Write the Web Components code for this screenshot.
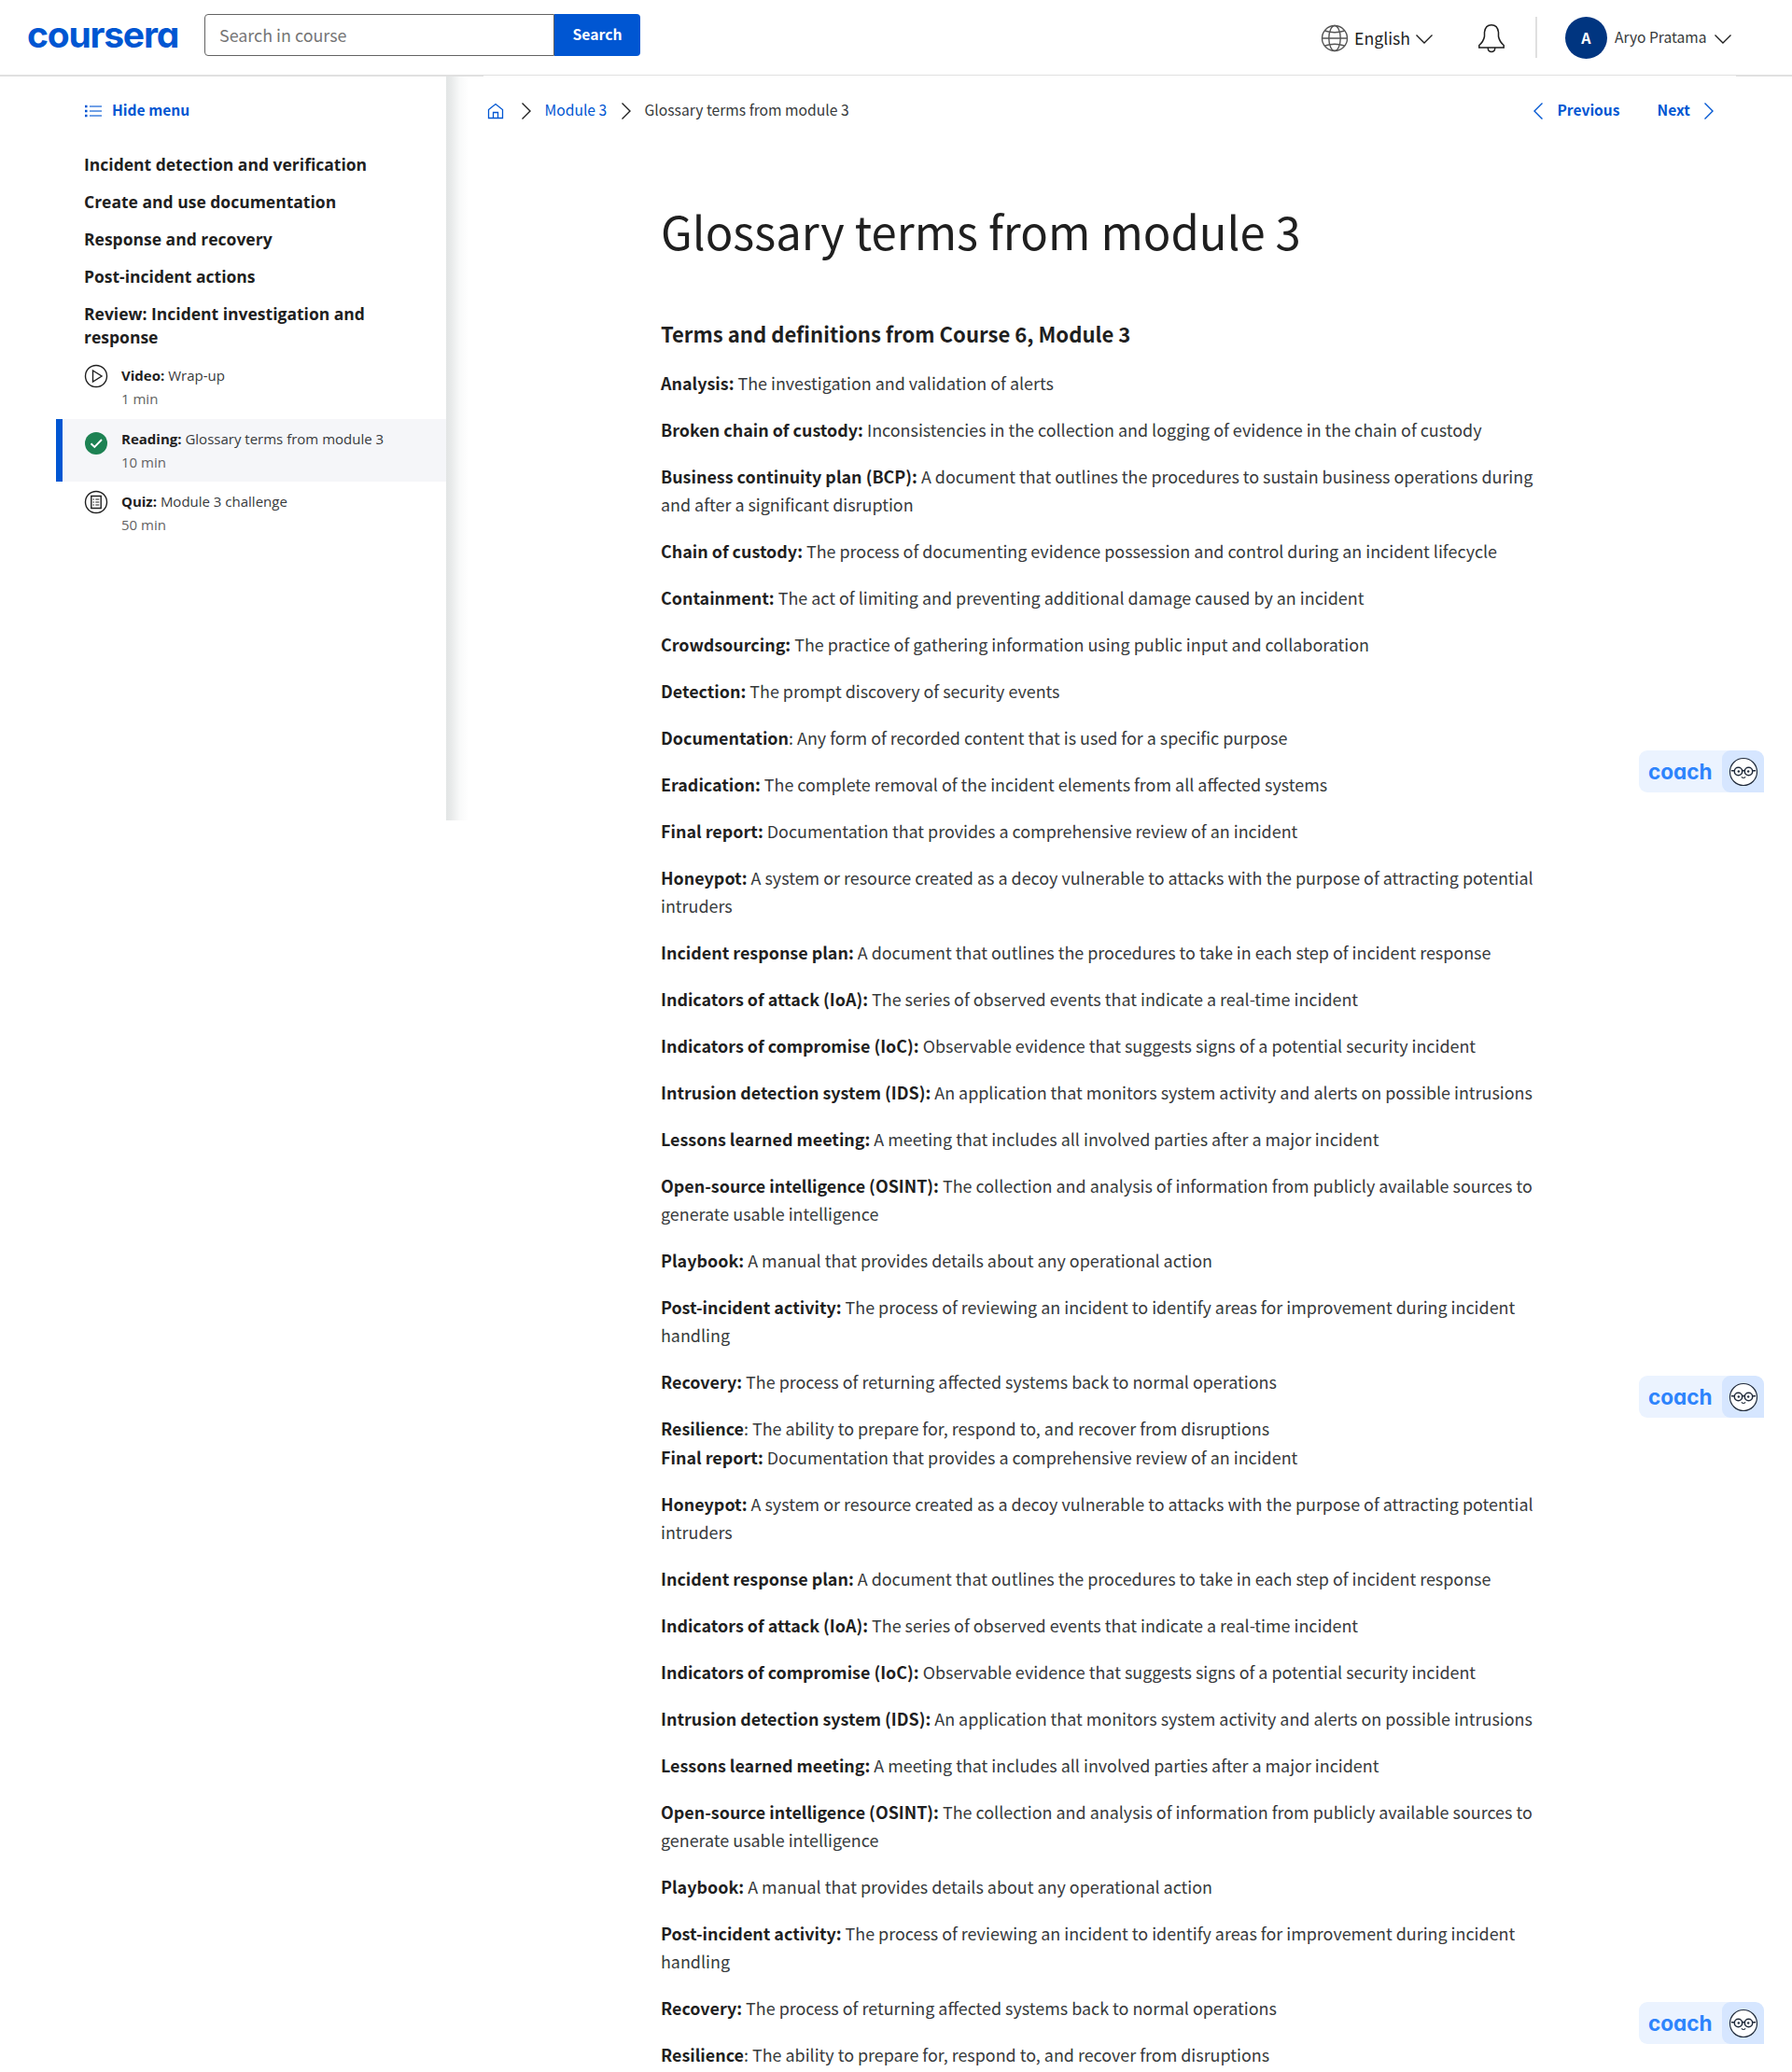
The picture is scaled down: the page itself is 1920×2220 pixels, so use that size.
<!DOCTYPE html>
<html lang="en">
<head>
<meta charset="utf-8">
<title>Glossary terms from module 3 | Coursera</title>
<style>
html,body{margin:0;background:#fff}
body{width:1920px;height:2220px;overflow:hidden;position:relative;font-family:"Noto Sans CJK SC","Open Sans",sans-serif;color:#1f1f1f}
</style>
</head>
<body>
<course-page></course-page>
<script>
const def=(name,html,setup)=>{
  const t=document.createElement('template');t.innerHTML=html;
  customElements.define(name,class extends HTMLElement{
    connectedCallback(){
      if(this.shadowRoot)return;
      const r=this.attachShadow({mode:'open'});
      r.appendChild(t.content.cloneNode(true));
      if(setup)setup(this,r);
    }
  });
};
const ICONS={
  down:[20,12,'<path d="M1.5 1.5 10 10 18.5 1.5" stroke-width="1.4"/>'],
  right:[12,20,'<path d="M1.5 1.5 10 10 1.5 18.5" stroke-width="1.4"/>'],
  left:[12,20,'<path d="M10.5 1.5 2 10 10.5 18.5" stroke-width="1.4"/>'],
  list:[20,14,'<path d="M6 2H19M6 7H19M6 12H19" stroke-width="1.5" opacity=".75"/><path d="M1 2H3.5M1 7H3.5M1 12H3.5" stroke-width="2.3"/>'],
  home:[18,18,'<path d="M1.5 7.5 9 1.5 16.5 7.5V16.5H1.5ZM6.5 16.5V10.5H11.5V16.5" stroke-width="1.3"/>'],
  globe:[30,30,'<g stroke-width="1.4"><circle cx="15" cy="15" r="13.5"/><ellipse cx="15" cy="15" rx="6.2" ry="13.5"/><path d="M1.5 15H28.5M4.5 7Q15 10.5 25.5 7M4.5 23Q15 19.5 25.5 23"/></g>'],
  bell:[30,32,'<path d="M1.8 26V23.5Q6.5 19.5 7.5 14V9.5Q8.500 1.8 15 1.8T22.5 9.5V14Q23.5 19.5 28.2 23.5V26ZM11.2 26.5Q11.5 30.5 15 30.5T18.8 26.5" stroke-width="1.5"/>'],
  play:[26,26,'<circle cx="13" cy="13" r="11.5" stroke-width="1.4"/><path d="M9.5 7 19 13 9.5 19Z" stroke-width="1.4"/>'],
  check:[26,26,'<circle cx="13" cy="13" r="12" fill="#1d8253" stroke="none"/><path d="M7.5 13.3 11.3 17 19 9" stroke="#fff" stroke-width="1.9"/>'],
  quiz:[26,26,'<circle cx="13" cy="13" r="11.5" stroke-width="1.4"/><path d="M7.8 6.5H18.2V19.5H7.8Z" stroke-width="1.4"/><path d="M9.5 10H11M12.3 10H16.3M9.5 13H11M12.3 13H16.3M9.5 16H11M12.3 16H16.3" stroke-width="1.2"/>'],
  face:[34,34,'<circle cx="17" cy="17" r="14.5" fill="#fff" stroke-width="1.2"/><g stroke-width="1.5"><circle cx="11.5" cy="16.5" r="4.2"/><circle cx="22.5" cy="16.5" r="4.2"/><path d="M15.7 16Q17 15 18.3 16M4 15.800H7.3M26.700 15.800H30"/></g><path d="M14.8 22.3Q17 24.8 19.2 22.3" stroke-width="1.1"/><circle cx="11.8" cy="16.5" r="1.2" fill="currentColor" stroke="none"/><circle cx="22.2" cy="16.5" r="1.2" fill="currentColor" stroke="none"/>']
};
def('ui-icon','<style>:host{display:block;flex:none}svg{display:block}</style>',(el,r)=>{
  const [w,h,p]=ICONS[el.getAttribute('name')];
  const d=document.createElement('div');
  d.innerHTML=`<svg width="${w}" height="${h}" viewBox="0 0 ${w} ${h}" fill="none" stroke="currentColor">${p}</svg>`;
  r.appendChild(d);
});
def('brand-word','<style>:host{display:block;font-family:Inter,sans-serif;font-feature-settings:"cv11";white-space:nowrap}</style><span><slot></slot></span>');
def('course-search',`<style>:host{display:flex;width:467px;height:45px;margin-top:15px}
.f{box-sizing:border-box;width:375px;border:1px solid #636363;border-radius:4px 0 0 4px;padding-left:15px;font-size:17.9px;line-height:43px;color:#757575}
.b{width:92px;background:#0056d2;color:#fff;border-radius:0 4px 4px 0;font-size:15.7px;font-weight:700;line-height:43px;text-align:center}</style>
<div class="f"><span>Search in course</span></div><div class="b"><span>Search</span></div>`);
def('site-header',`<style>:host{display:flex;height:80px;align-items:flex-start;border-bottom:1px solid #e0e0e0}
brand-word{width:190px;margin-left:29px;font-size:39px;font-weight:700;letter-spacing:-1.2px;line-height:48px;padding-top:13px;color:#0056d2}
.r{display:flex;margin-left:auto;align-items:flex-start;width:505px}
.t{white-space:nowrap}
.eng{width:60px;margin:20px 5px 0 6px;font-size:17.7px;line-height:40px}
.av{width:45px;height:45px;border-radius:50%;background:#003580;color:#fff;font-size:16px;font-weight:700;line-height:44px;text-align:center;margin:18px 8px 0 30px}
.u{width:98px;font-size:15.6px;line-height:40px;margin:19px 8px 0 0;color:#373a3c}
.d{width:2px;height:44px;background:#e0e0e0;margin:18px 0 0 32px}</style>
<brand-word>coursera</brand-word><course-search></course-search>
<div class="r"><ui-icon name="globe" style="color:#555;margin-top:26px"></ui-icon><div class="t eng"><span>English</span></div>
<ui-icon name="down" style="margin-top:36px;margin-right:47px"></ui-icon><ui-icon name="bell" style="margin-top:25px"></ui-icon><div class="d"></div>
<div class="av"><span>A</span></div><div class="t u"><span>Aryo Pratama</span></div><ui-icon name="down" style="margin-top:36px"></ui-icon></div>`);
def('menu-section','<style>:host{display:block;padding:0 70px 15px 90px;font-family:"Open Sans",sans-serif;font-weight:700;font-size:17.5px;line-height:25px}</style><span><slot></slot></span>');
def('menu-item',`<style>:host{display:flex;box-sizing:border-box;height:67px;margin-left:60px;border-left:7px solid transparent;padding:9px 0 0 22.5px;font:15px/25px "Open Sans",sans-serif;color:#373a3c}
:host([icon=play]){padding-top:8px}
:host([active]){background:#f5f6f9;border-color:#0056d2}
.i{margin-right:14.5px;color:#1f1f1f}.m{color:#636363}b{font-weight:700;color:#1f1f1f}.x{white-space:nowrap}</style><div class="i"></div><div class="x"><span class="l"><b></b> <slot></slot></span><div class="m"></div></div>`,(el,r)=>{
  const i=r.querySelector('.i');i.style.marginTop=el.getAttribute('shift')+'px';
  i.innerHTML=`<ui-icon name="${el.getAttribute('icon')}"></ui-icon>`;
  r.querySelector('b').textContent=el.getAttribute('kind');
  r.querySelector('.m').textContent=el.getAttribute('time');
});
def('course-menu',`<style>:host{display:flex;width:502px;height:797px;flex:none}
.p{width:478px;flex:none}.s{width:24px;background:linear-gradient(90deg,#e2e5e5,#e9ebeb 25%,#f8f9f9 60%,#fff)}
.h{display:flex;gap:10px;padding:20px 0 32px 90px;color:#0056d2;font-size:15.6px;font-weight:700;line-height:30px}
.h ui-icon{margin-top:10px}menu-section:last-of-type{padding-bottom:8px}</style>
<div class="p"><div class="h"><ui-icon name="list"></ui-icon><span>Hide menu</span></div>
<menu-section>Incident detection and verification</menu-section><menu-section>Create and use documentation</menu-section><menu-section>Response and recovery</menu-section><menu-section>Post-incident actions</menu-section><menu-section>Review: Incident investigation and response</menu-section>
<menu-item icon="play" shift="0" kind="Video:" time="1 min">Wrap-up</menu-item>
<menu-item icon="check" shift="4" kind="Reading:" time="10 min" active>Glossary terms from module 3</menu-item>
<menu-item icon="quiz" shift="0" kind="Quiz:" time="50 min">Module 3 challenge</menu-item></div><div class="s"></div>`);
def('crumb-bar',`<style>:host{display:flex;box-sizing:border-box;height:76px;align-items:flex-start;padding:20px 83px 0 20px;font-size:15.67px;line-height:31px;white-space:nowrap}
ui-icon{margin-top:7px}.a{color:#0056d2}.n{margin-left:auto;display:flex;font-size:15.55px;font-weight:700;color:#0056d2}</style>
<ui-icon class="a" name="home" style="margin:8px 18px 0 0"></ui-icon><ui-icon name="right"></ui-icon><span class="a" style="width:66px;margin:0 15px 0 13.5px">Module 3</span><ui-icon name="right"></ui-icon><span style="margin-left:14px;color:#373a3c">Glossary terms from module 3</span>
<div class="n"><ui-icon name="left"></ui-icon><span style="width:67px;margin:0 40px 0 15px">Previous</span><span style="width:35px;margin-right:14.5px">Next</span><ui-icon name="right"></ui-icon></div>`);
def('term-entry',`<style>:host{display:block;font-size:17.92px;line-height:30px;margin-bottom:20px;color:#373a3c;white-space:nowrap}b{color:#1f1f1f}:host([tight]){margin-bottom:1px}</style><span><b></b><slot></slot></span>`,(el,r)=>{r.querySelector('b').textContent=el.getAttribute('term')});
const T=[['Analysis:',' The investigation and validation of alerts'],
['Broken chain of custody:',' Inconsistencies in the collection and logging of evidence in the chain of custody'],
['Business continuity plan (BCP):',' A document that outlines the procedures to sustain business operations during<br>and after a significant disruption'],
['Chain of custody:',' The process of documenting evidence possession and control during an incident lifecycle'],
['Containment:',' The act of limiting and preventing additional damage caused by an incident'],
['Crowdsourcing:',' The practice of gathering information using public input and collaboration'],
['Detection:',' The prompt discovery of security events'],
['Documentation',': Any form of recorded content that is used for a specific purpose'],
['Eradication:',' The complete removal of the incident elements from all affected systems']];
const R=[['Final report:',' Documentation that provides a comprehensive review of an incident'],
['Honeypot:',' A system or resource created as a decoy vulnerable to attacks with the purpose of attracting potential<br>intruders'],
['Incident response plan:',' A document that outlines the procedures to take in each step of incident response'],
['Indicators of attack (IoA):',' The series of observed events that indicate a real-time incident'],
['Indicators of compromise (IoC):',' Observable evidence that suggests signs of a potential security incident'],
['Intrusion detection system (IDS):',' An application that monitors system activity and alerts on possible intrusions'],
['Lessons learned meeting:',' A meeting that includes all involved parties after a major incident'],
['Open-source intelligence (OSINT):',' The collection and analysis of information from publicly available sources to<br>generate usable intelligence'],
['Playbook:',' A manual that provides details about any operational action'],
['Post-incident activity:',' The process of reviewing an incident to identify areas for improvement during incident<br>handling'],
['Recovery:',' The process of returning affected systems back to normal operations'],
['Resilience',': The ability to prepare for, respond to, and recover from disruptions']];
const entry=([a,b],tight)=>`<term-entry term="${a}"${tight?' tight':''}>${b}</term-entry>`;
def('glossary-article',`<style>:host{display:block;padding-left:206px}
h1{margin:0;font-size:49px;font-weight:400;line-height:80px;height:80px;padding-top:49px;white-space:nowrap}
h2{margin:0;font-size:22.1px;font-weight:700;line-height:36px;padding:52px 0 20px;white-space:nowrap}</style>
<h1><span>Glossary terms from module 3</span></h1><h2><span>Terms and definitions from Course 6, Module 3</span></h2>
${T.map(x=>entry(x)).join('')}${R.map((x,i)=>entry(x,i==R.length-1)).join('')}${R.map(x=>entry(x)).join('')}`);
def('coach-tab',`<style>:host{position:absolute;left:1756px;width:134px;height:45px;display:flex;border-radius:9px 9px 0 9px;background:#ebf3ff;overflow:hidden}
brand-word{box-sizing:border-box;width:89px;padding-left:10px;color:#2d84fc;font-size:22.5px;font-weight:700;line-height:45px;letter-spacing:0}
.f{flex:none;width:45px;background:#d6e6ff;border-radius:9px 9px 0 9px;padding:6px 0 0 6px;box-sizing:border-box;color:#222c3c}</style><brand-word>coach</brand-word><div class="f"><ui-icon name="face"></ui-icon></div>`);
def('course-page',`<style>:host{display:block}.r{display:flex;align-items:flex-start}.m{flex:1;min-width:0}
.k{display:flex;justify-content:space-between;height:1px}.k i{height:1px;background:#e0e0e0}
coach-tab:nth-of-type(1){top:804px}coach-tab:nth-of-type(2){top:1474px}coach-tab:nth-of-type(3){top:2145px}</style>
<site-header></site-header><div class="k"><i style="width:518px"></i><i style="width:60px"></i></div>
<div class="r"><course-menu></course-menu><div class="m"><crumb-bar></crumb-bar><glossary-article></glossary-article></div></div>
<coach-tab></coach-tab><coach-tab></coach-tab><coach-tab></coach-tab>`);
</script>
</body>
</html>
